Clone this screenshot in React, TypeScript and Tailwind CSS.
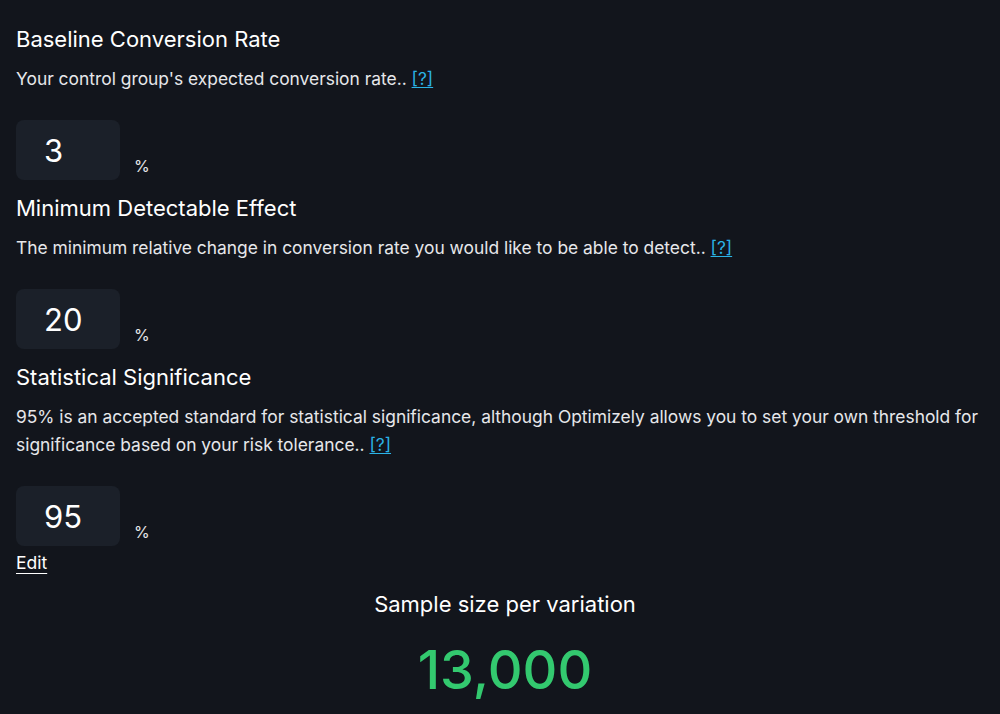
import React, { useState } from 'react';

interface FieldProps {
  title: string;
  description: string;
  value: string;
  onChange: (v: string) => void;
}

const Field = ({ title, description, value, onChange }: FieldProps) => (
  <div>
    <h2 className="text-[22px] leading-[28px] font-normal text-white">{title}</h2>
    <p className="mt-[12px] text-[17.4px] leading-[28px] text-[#e6e7ea]">
      {description}{' '}
      <a href="#" className="text-[#2bb3e6] underline underline-offset-2">[?]</a>
    </p>
    <div className="mt-[27px] flex items-end">
      <input
        type="text"
        value={value}
        onChange={(e) => onChange(e.target.value)}
        className="w-[104px] h-[60px] rounded-lg bg-[#1b2029] pl-[28px] text-[31px] text-white outline-none"
      />
      <span className="ml-[14px] mb-[2px] text-[16px] text-[#e6e7ea]">%</span>
    </div>
  </div>
);

const App = () => {
  const [baseline, setBaseline] = useState('3');
  const [mde, setMde] = useState('20');
  const [sig, setSig] = useState('95');

  return (
    <div
      className="min-h-[714px] bg-[#12151c] px-4 pt-[25px]"
      style={{ fontFamily: 'Inter, "Noto Sans", sans-serif' }}
    >
      <div className="space-y-[14px]">
        <Field
          title="Baseline Conversion Rate"
          description="Your control group's expected conversion rate.."
          value={baseline}
          onChange={setBaseline}
        />
        <Field
          title="Minimum Detectable Effect"
          description="The minimum relative change in conversion rate you would like to be able to detect.."
          value={mde}
          onChange={setMde}
        />
        <Field
          title="Statistical Significance"
          description="95% is an accepted standard for statistical significance, although Optimizely allows you to set your own threshold for significance based on your risk tolerance.."
          value={sig}
          onChange={setSig}
        />
      </div>
      <a href="#" className="block w-fit mt-[5px] text-[17.5px] leading-[24px] text-white underline underline-offset-4">Edit</a>
      <div className="mt-[15px] flex flex-col items-center pl-[10px]">
        <div className="text-[22px] leading-[28px] text-white">Sample size per variation</div>
        <div className="mt-[20px] text-[54px] leading-[64px] font-medium text-[#33c96f]">13,000</div>
      </div>
    </div>
  );
};

export default App;
